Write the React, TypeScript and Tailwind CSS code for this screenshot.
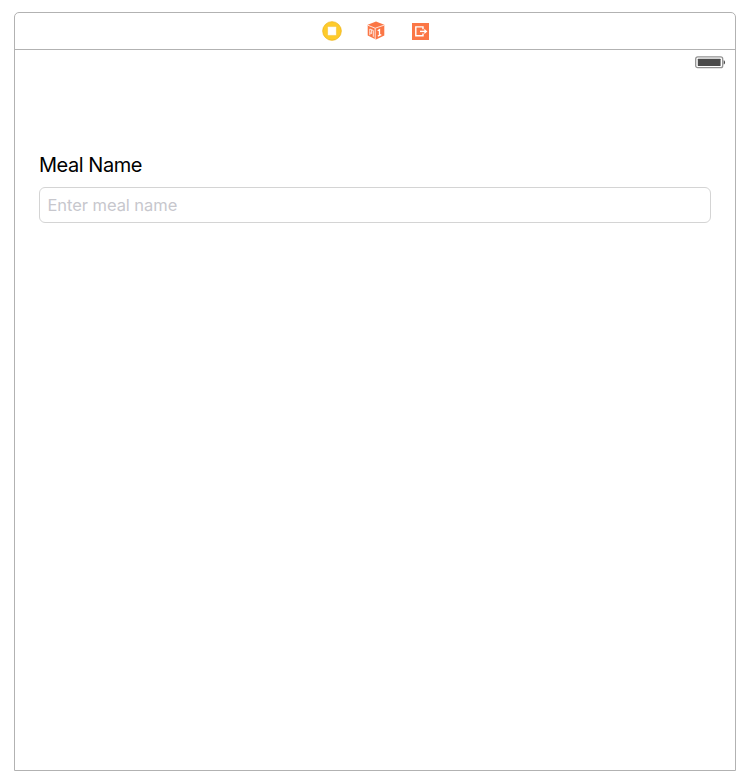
function ControllerIcon() {
  return (
    <svg width="20" height="20" viewBox="0 0 20 20" aria-hidden="true">
      <circle cx="10" cy="10" r="9.3" fill="#fecb2b" stroke="#efb51b" strokeWidth="0.8" />
      <rect x="5.6" y="5.6" width="8.8" height="8.8" rx="0.6" fill="#fff" stroke="#f2bd2a" strokeWidth="0.5" />
    </svg>
  );
}

function ResponderIcon() {
  return (
    <svg width="18" height="19" viewBox="0 0 18 19" aria-hidden="true">
      <path d="M9 .4 17.3 3.8V14.4L9 18.6.7 14.4V3.8Z" fill="#fb7645" />
      <path d="M1 4.3 8.2 7.2 17 4.2M8.2 7.2V18" fill="none" stroke="#fff" strokeWidth="0.8" />
      <path d="M2.8 14.2V8l3.5 1.5v6.3M4.6 9v3.6l-1.8-.8" fill="none" stroke="#fff" strokeWidth="0.8" />
      <path d="m10.7 9.8 1.8-1.2v6.1M10.8 15.1l3.5-1.4" fill="none" stroke="#fff" strokeWidth="1.3" />
    </svg>
  );
}

function ExitIcon() {
  return (
    <svg width="17" height="17" viewBox="0 0 17 17" aria-hidden="true">
      <rect width="17" height="17" fill="#fb7645" />
      <path d="M11 6.2V3.9H3.8v8.9H11v-2.3" fill="none" stroke="#fff" strokeWidth="1.4" />
      <path d="M8 8.4h5.2" stroke="#fff" strokeWidth="1.4" />
      <path d="m12.3 5.8 3.1 2.6-3.1 2.6Z" fill="#fff" />
    </svg>
  );
}

function Battery() {
  return (
    <svg width="31" height="13" viewBox="0 0 31 13" aria-hidden="true">
      <rect x="0.7" y="0.9" width="27" height="10.8" rx="2" fill="#fff" stroke="#929292" strokeWidth="1.3" />
      <rect x="2.8" y="2.7" width="22.8" height="7.3" rx="0.5" fill="#4b4b4b" />
      <path d="M28.7 4.2c1.8.6 1.8 3.8 0 4.4Z" fill="#4b4b4b" />
    </svg>
  );
}

export default function App() {
  return (
    <div className="h-[783px] w-[748px] bg-white pt-3 pl-3.5 font-['Inter','Liberation_Sans',sans-serif]">
      <main className="flex h-[759px] w-[722px] flex-col rounded-t-[5px] border border-[#b2b2b2] bg-white">
        <header className="flex h-[37px] shrink-0 border-b border-[#b2b2b2] pl-[307px]">
          <div className="pt-2"><ControllerIcon /></div>
          <div className="ml-[25px] pt-2"><ResponderIcon /></div>
          <div className="ml-[27px] pt-2.5"><ExitIcon /></div>
        </header>
        <div className="flex h-[102px] shrink-0 justify-end pt-1.5 pr-[9px]">
          <Battery />
        </div>
        <section className="px-6">
          <label htmlFor="meal-name" className="block h-[35px] text-[20px] leading-[26px] tracking-[-0.45px] text-black">
            Meal Name
          </label>
          <input
            id="meal-name"
            placeholder="Enter meal name"
            className="block h-9 w-[672px] rounded-[6px] border border-[#d4d4d4] bg-white px-[7.5px] text-[16.5px] tracking-[-0.06px] outline-none placeholder:text-[#c7c7cd]"
          />
        </section>
      </main>
    </div>
  );
}
